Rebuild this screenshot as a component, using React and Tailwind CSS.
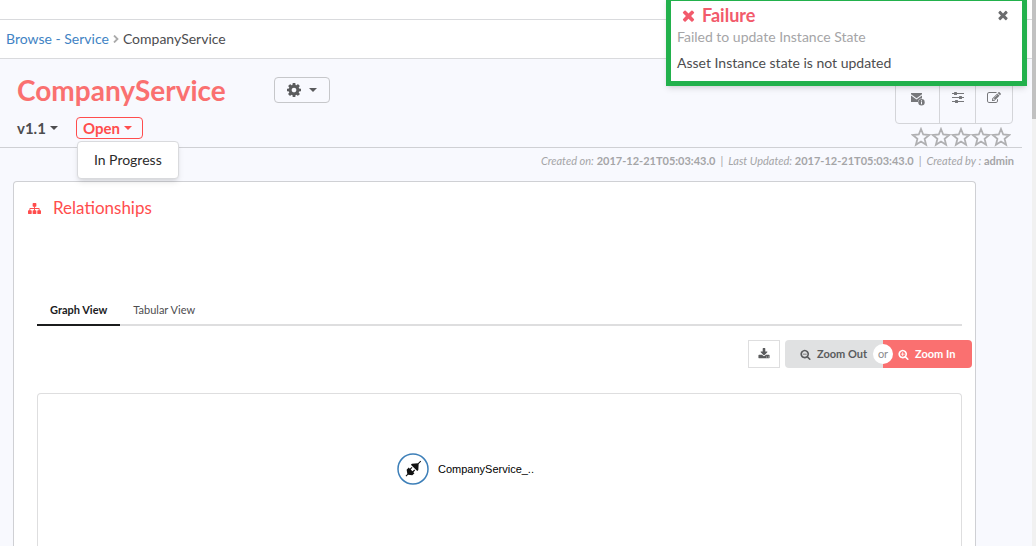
import React, { useState } from 'react';

const paths = {
  cog: 'M1024 768q0-106-75-181t-181-75-181 75-75 181 75 181 181 75 181-75 75-181zm512-109v222q0 12-8 23t-20 13l-185 28q-19 54-39 91 35 50 107 138 10 12 10 25t-9 23q-27 37-99 108t-94 71q-12 0-26-9l-138-108q-44 23-91 38-16 136-29 186-7 28-36 28h-222q-14 0-24.500-8.500t-11.500-21.500l-28-184q-49-16-90-37l-141 107q-10 9-25 9-14 0-25-11-126-114-165-168-7-10-7-23 0-12 8-23 15-21 51-66.500t54-70.500q-27-50-41-99l-183-27q-13-2-21-12.500t-8-23.500v-222q0-12 8-23t19-13l186-28q14-46 39-92-40-57-107-138-10-12-10-24 0-10 9-23 26-36 98.500-107.500t94.500-71.500q13 0 26 10l138 107q44-23 91-38 16-136 29-186 7-28 36-28h222q14 0 24.500 8.500t11.500 21.500l28 184q49 16 90 37l142-107q9-9 24-9 13 0 25 10 129 119 165 170 7 8 7 22 0 12-8 23-15 21-51 66.500t-54 70.500q26 50 41 98l183 28q13 2 21 12.500t8 23.500z',
  times:
    'M1490 1322q0 40-28 68l-136 136q-28 28-68 28t-68-28l-294-294-294 294q-28 28-68 28t-68-28l-136-136q-28-28-28-68t28-68l294-294-294-294q-28-28-28-68t28-68l136-136q28-28 68-28t68 28l294 294 294-294q28-28 68-28t68 28l136 136q28 28 28 68t-28 68l-294 294 294 294q28 28 28 68z',
  sitemap:
    'M1792 1248v320q0 40-28 68t-68 28h-320q-40 0-68-28t-28-68v-320q0-40 28-68t68-28h96v-192h-512v192h96q40 0 68 28t28 68v320q0 40-28 68t-68 28h-320q-40 0-68-28t-28-68v-320q0-40 28-68t68-28h96v-192h-512v192h96q40 0 68 28t28 68v320q0 40-28 68t-68 28h-320q-40 0-68-28t-28-68v-320q0-40 28-68t68-28h96v-192q0-52 38-90t90-38h512v-192h-96q-40 0-68-28t-28-68v-320q0-40 28-68t68-28h320q40 0 68 28t28 68v320q0 40-28 68t-68 28h-96v192h512q52 0 90 38t38 90v192h96q40 0 68 28t28 68z',
  star: 'M1201 1004l306-297-422-62-189-382-189 382-422 62 306 297-73 421 378-199 377 199zm527-357q0 22-26 48l-363 354 86 500q1 7 1 20 0 50-41 50-19 0-40-12l-449-236-449 236q-22 12-40 12-21 0-31.500-14.500t-10.500-35.500q0-6 2-20l86-500-364-354q-25-27-25-48 0-37 56-46l502-73 225-455q19-41 49-41t49 41l225 455 502 73q56 9 56 46z',
  download:
    'M1344 1344q0-26-19-45t-45-19-45 19-19 45 19 45 45 19 45-19 19-45zm256 0q0-26-19-45t-45-19-45 19-19 45 19 45 45 19 45-19 19-45zm128-224v320q0 40-28 68t-68 28h-1472q-40 0-68-28t-28-68v-320q0-40 28-68t68-28h465l135 136q58 56 136 56t136-56l136-136h464q40 0 68 28t28 68zm-325-569q17 41-14 70l-448 448q-18 19-45 19t-45-19l-448-448q-31-29-14-70 17-39 59-39h256v-448q0-26 19-45t45-19h256q26 0 45 19t19 45v448h256q42 0 59 39z',
  zoomOut:
    'M1088 800v64q0 13-9.500 22.500t-22.500 9.500h-576q-13 0-22.500-9.500t-9.500-22.500v-64q0-13 9.500-22.500t22.500-9.500h576q13 0 22.500 9.500t9.500 22.500zm128 32q0-185-131.500-316.500t-316.500-131.500-316.500 131.500-131.500 316.500 131.500 316.500 316.500 131.500 316.500-131.500 131.500-316.500zm512 832q0 53-37.500 90.500t-90.500 37.500q-54 0-90-38l-343-342q-179 124-399 124-143 0-273.500-55.500t-225-150-150-225-55.500-273.500 55.500-273.500 150-225 225-150 273.500-55.500 273.500 55.500 225 150 150 225 55.500 273.500q0 220-124 399l343 343q37 37 37 90z',
  zoomIn:
    'M1088 800v64q0 13-9.500 22.500t-22.500 9.500h-224v224q0 13-9.500 22.500t-22.500 9.500h-64q-13 0-22.500-9.500t-9.500-22.500v-224h-224q-13 0-22.500-9.500t-9.500-22.500v-64q0-13 9.500-22.500t22.500-9.500h224v-224q0-13 9.500-22.500t22.500-9.500h64q13 0 22.500 9.500t9.500 22.500v224h224q13 0 22.500 9.500t9.500 22.500zm128 32q0-185-131.500-316.500t-316.500-131.500-316.500 131.500-131.500 316.500 131.500 316.500 316.500 131.500 316.500-131.500 131.500-316.500zm512 832q0 53-37.500 90.500t-90.500 37.500q-54 0-90-38l-343-342q-179 124-399 124-143 0-273.500-55.500t-225-150-150-225-55.500-273.500 55.500-273.500 150-225 225-150 273.500-55.500 273.500 55.500 225 150 150 225 55.500 273.500q0 220-124 399l343 343q37 37 37 90z',
  edit: 'M888 1184l116-116-152-152-116 116v56h96v96h56zm440-720q-16-16-33 1l-350 350q-17 17-1 33t33-1l350-350q17-17 1-33zm80 594v190q0 119-84.500 203.500t-203.500 84.500h-832q-119 0-203.500-84.500t-84.500-203.500v-832q0-119 84.500-203.500t203.500-84.500h832q63 0 117 25 15 7 18 23 3 17-9 29l-49 49q-14 14-32 8-23-6-45-6h-832q-66 0-113 47t-47 113v832q0 66 47 113t113 47h832q66 0 113-47t47-113v-126q0-13 9-22l64-64q15-15 35-7t20 29zm-96-738l288 288-672 672h-288v-288zm444 132l-92 92-288-288 92-92q28-28 68-28t68 28l152 152q28 28 28 68t-28 68z',
};

const Icon = ({ name, className, viewBox = '0 0 1792 1792' }) => (
  <svg viewBox={viewBox} fill="currentColor" className={className} aria-hidden="true">
    <path d={paths[name]} />
  </svg>
);

const Caret = () => (
  <svg viewBox="0 0 8 4" fill="currentColor" className="w-2 h-1" aria-hidden="true">
    <path d="M0 0h8L4 4z" />
  </svg>
);

const MailIcon = () => (
  <svg viewBox="0 0 14 13" fill="currentColor" className="w-3.5 h-[13px]" aria-hidden="true">
    <path d="M0 0h11v1.300L5.500 5.200 0 1.300z" />
    <path d="M0 2.600l5.500 3.800L11 2.600v2.800a3.800 3.800 0 0 0-4 3.600H0z" />
    <circle cx="10.500" cy="9.300" r="3.200" />
    <path d="M10 7.300h1v1h-1zM10 8.800h1v2.400h-1z" fill="#f8f9fe" />
  </svg>
);

const SlidersIcon = () => (
  <svg viewBox="0 0 12 11" fill="currentColor" className="w-3 h-[11px]" aria-hidden="true">
    <path d="M0 1h12v1H0zM0 5h12v1H0zM0 9h12v1H0z" />
    <rect x="2" width="3" height="3" rx=".6" />
    <rect x="7" y="4" width="3" height="3" rx=".6" />
    <rect x="3" y="8" width="3" height="3" rx=".6" />
  </svg>
);

const PlugIcon = () => (
  <svg viewBox="0 0 32 32" className="w-8 h-8" aria-hidden="true">
    <circle cx="16" cy="16" r="15" fill="#fff" stroke="#3d7fb8" strokeWidth="1.500" />
    <g transform="rotate(-45 16 16)" fill="#111">
      <path d="M6 15.500h2.500L11 12h3v1.500h2.500v1.200H14v2.600h2.500v1.200H14V20h-3l-2.500-3.500H6z" />
      <path d="M17.500 11.500H19l4.500 4H27v1h-3.500l-4.500 4h-1.500z" />
    </g>
  </svg>
);

const meta = [
  { label: 'Created on:', value: '2017-12-21T05:03:43.0' },
  { label: 'Last Updated:', value: '2017-12-21T05:03:43.0' },
  { label: 'Created by :', value: 'admin' },
];

const App = () => {
  const [tab, setTab] = useState('Graph View');
  const [showToast, setShowToast] = useState(true);
  const [menuOpen, setMenuOpen] = useState(true);

  return (
    <div className="relative flex min-h-screen overflow-hidden bg-[#f8f9fe] font-[Lato,sans-serif] text-[#4d4d4f]">
      <main className="flex flex-1 flex-col">
        {/* Breadcrumb */}
        <div className="h-5 border-b border-[#d9dadd] bg-white" />
        <nav className="flex h-[39px] items-center gap-1 border-b border-[#d9dadd] bg-white px-1.5 text-sm">
          <a href="#browse" className="text-[#4183c4]">
            Browse - Service
          </a>
          <svg viewBox="0 0 6 8" className="w-1.5 h-2" fill="none" stroke="#aaa" strokeWidth="1.800" aria-hidden="true">
            <path d="M1 .5L4.500 4 1 7.500" />
          </svg>
          <span>CompanyService</span>
        </nav>

        {/* Header */}
        <header className="mr-2.5 flex justify-between border-b border-[#cfd0d4] pl-[17px]">
          <div className="pt-[15px]">
            <div className="flex items-center gap-12">
              <h1 className="text-[28px] leading-8 font-bold text-[#fa7070]">CompanyService</h1>
              <button
                aria-label="Settings"
                className="flex h-[26px] w-14 items-center justify-center gap-2 rounded border border-[#c6c7ca] text-[#5a5b5d]"
              >
                <Icon name="cog" viewBox="0 0 1536 1536" className="size-3.5" />
                <Caret />
              </button>
            </div>
            <div className="flex items-center gap-[18px] pt-[11px]">
              <button className="flex items-center gap-1 text-[15px] leading-[22px] font-bold">
                v1.1
                <Caret />
              </button>
              <div className="relative">
                <button
                  onClick={() => setMenuOpen(!menuOpen)}
                  className="flex h-[22px] items-center gap-1 rounded border border-[#ff4d4d] pr-2.5 pl-1.5 text-[15px] font-bold text-[#ff4d4d]"
                >
                  Open
                  <Caret />
                </button>
                {menuOpen && (
                  <div className="absolute top-full left-0 z-10 mt-0.5 ml-px rounded border border-[#d9dadd] bg-white shadow-md">
                    <button className="px-4 py-2 text-sm whitespace-nowrap text-[#2b2b2b]">In Progress</button>
                  </div>
                )}
              </div>
            </div>
          </div>

          <div className="flex flex-col items-end pt-2.5 pr-[9px]">
            <div className="flex h-[55px] rounded border border-[#d4d5d9] text-[#77787b]">
              <button aria-label="Notify" className="flex w-[43px] items-center justify-center pt-1.5">
                <MailIcon />
              </button>
              <button aria-label="Options" className="flex w-9 items-center justify-center border-l border-[#d4d5d9] pt-0.5">
                <SlidersIcon />
              </button>
              <button aria-label="Edit" className="flex w-[37px] items-center justify-center border-l border-[#d4d5d9] pt-0.5">
                <Icon name="edit" className="size-3.5" />
              </button>
            </div>
            <div className="flex pt-[3px] pr-0.5 text-[#b0b0b2]">
              {[1, 2, 3, 4, 5].map((n) => (
                <button key={n} aria-label={`Rate ${n}`} className="flex w-5 justify-center">
                  <svg
                    viewBox="0 0 20 20"
                    className="size-5 shrink-0"
                    fill="none"
                    stroke="currentColor"
                    strokeWidth="1.800"
                    aria-hidden="true"
                  >
                    <path d="M10 2l2.200 5.500 6 .5-4.600 3.900 1.500 5.900L10 14.600l-5.100 3.200 1.500-5.900L1.800 8l6-.5z" />
                  </svg>
                </button>
              ))}
            </div>
          </div>
        </header>

        <div className="flex justify-end pt-[5px] pr-[18px] pb-3 text-[11px] leading-4 text-[#a5a5a7]">
          {meta.map((item, i) => (
            <span key={item.label}>
              {i > 0 && <span className="px-[5px]">|</span>}
              <i>{item.label}</i> <b>{item.value}</b>
            </span>
          ))}
        </div>

        {/* Relationships */}
        <section className="mr-14 ml-[13px] flex flex-1 flex-col rounded-t border border-b-0 border-[#cfd0d4] bg-white pr-[13px] pl-[23px]">
          <h2 className="-ml-[9px] flex items-center gap-3 pt-[15px] text-[17px] leading-[22px] text-[#ff4d4d]">
            <Icon name="sitemap" className="size-[13px]" />
            Relationships
          </h2>

          <div className="mt-[77px] flex border-b-2 border-[#dededf] text-[11px] leading-4">
            {['Graph View', 'Tabular View'].map((name) => (
              <button
                key={name}
                onClick={() => setTab(name)}
                className={
                  tab === name
                    ? '-mb-0.5 border-b-2 border-[#1b1c1d] px-[13px] pt-1.5 pb-1.5 font-bold text-[#1b1c1d]'
                    : '-mb-0.5 border-b-2 border-transparent px-[13px] pt-1.5 pb-1.5'
                }
              >
                {name}
              </button>
            ))}
          </div>

          <div className="-mr-2.5 flex justify-end gap-[5px] pt-3.5 text-[11px] font-bold">
            <button
              aria-label="Download"
              className="flex h-7 w-8 items-center justify-center border border-[#dededf] text-[#5a5b5d]"
            >
              <Icon name="download" className="size-3" />
            </button>
            <div className="relative flex h-7">
              <button className="flex w-[98px] items-center gap-1.5 rounded-l bg-[#e0e1e2] pl-[15px] text-[#5a5b5d]">
                <Icon name="zoomOut" className="size-[11px]" />
                Zoom Out
              </button>
              <button className="flex w-[89px] items-center gap-1.5 rounded-r bg-[#fa7070] pl-[15px] text-white">
                <Icon name="zoomIn" className="size-[11px]" />
                Zoom In
              </button>
              <span className="absolute top-1 left-[88px] flex size-5 items-center justify-center rounded-full bg-white font-normal text-[#8c8c8e]">
                or
              </span>
            </div>
          </div>

          <div className="mt-[25px] flex flex-1 items-start justify-center rounded-t border border-b-0 border-[#dededf] pt-[59px] pr-[68px]">
            <div className="flex items-center gap-[9px] font-['Liberation_Sans',sans-serif] text-[11px] text-black">
              <PlugIcon />
              CompanyService_..
            </div>
          </div>
        </section>
      </main>

      {/* Scrollbar */}
      <div className="w-1 bg-[#f1f1f1]">
        <div className="h-[119px] bg-[#c1c1c1]" />
      </div>

      {showToast && (
        <div
          role="alert"
          className="absolute -top-1 right-[9px] z-20 w-[361px] border-5 border-[#22b14c] bg-white pt-0.5 pr-1 pb-2 pl-1.5 text-sm shadow-md"
        >
          <div className="flex items-center justify-between pr-2 pl-[3px]">
            <h3 className="flex items-center gap-[5px] text-lg leading-6 font-bold text-[#f25a6b]">
              <Icon name="times" className="size-[17px]" />
              Failure
            </h3>
            <button aria-label="Close" onClick={() => setShowToast(false)} className="text-[#6b6c6e]">
              <Icon name="times" className="size-3.5" />
            </button>
          </div>
          <p className="leading-5 text-[#a5a5a7]">Failed to update Instance State</p>
          <p className="pt-1.5 leading-5">Asset Instance state is not updated</p>
        </div>
      )}
    </div>
  );
};

export default App;
